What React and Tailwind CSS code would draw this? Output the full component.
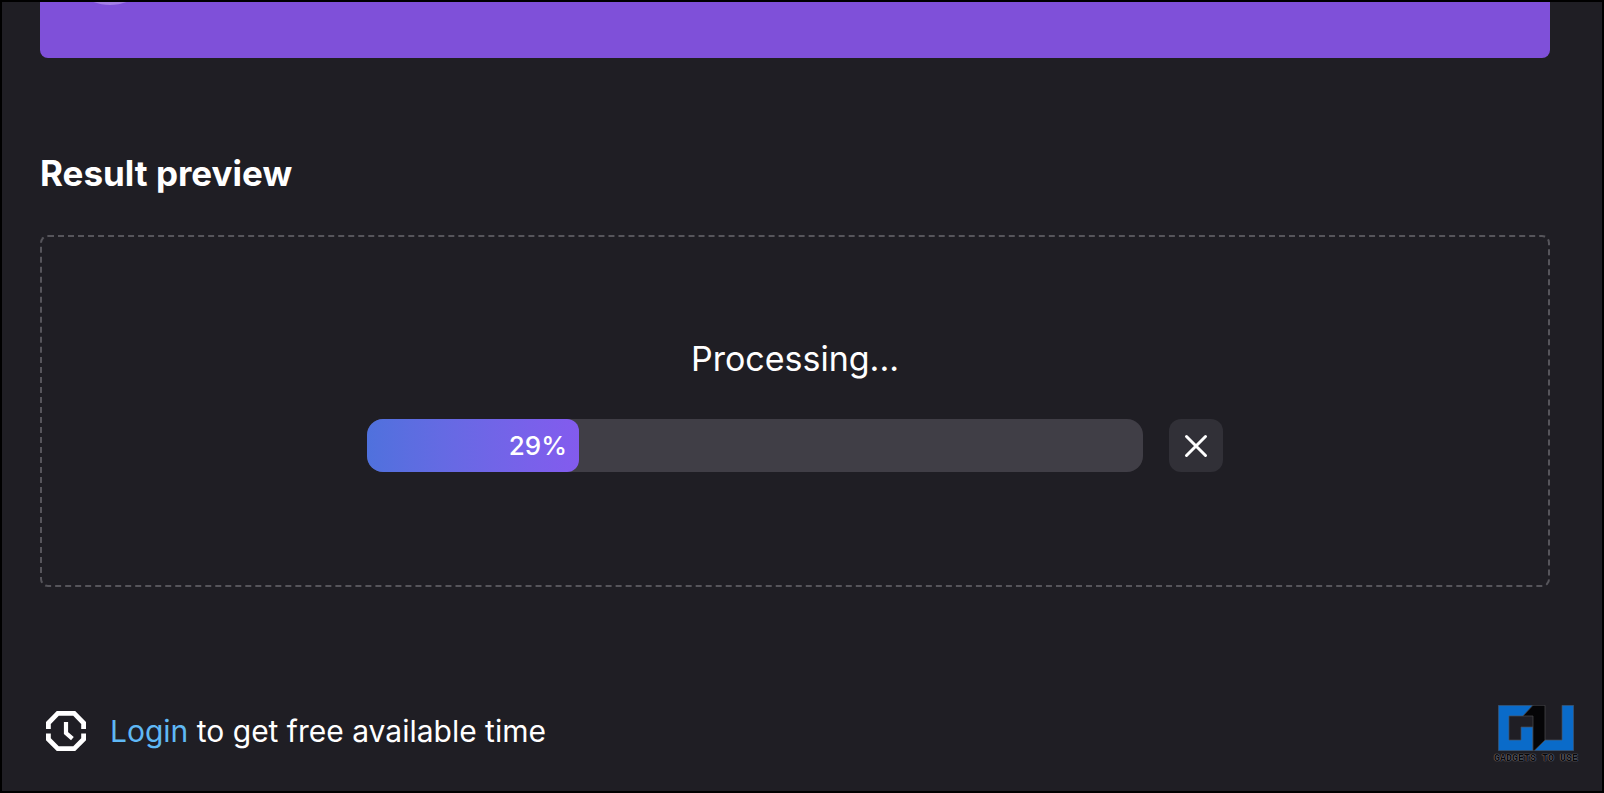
const progress = 29;

function ClockIcon() {
  return (
    <svg className="size-10 shrink-0" viewBox="0 0 40 40" fill="none" stroke="currentColor" strokeWidth="4.8" aria-hidden="true">
      <path d="M2.4 18V12L11.8 2.4H28.2L37.6 12V18" />
      <path d="M2.4 22.5V28.2L11.8 37.6H28.2L37.6 28.2V22.5" />
      <path d="M20 11V22L26.4 27.6" strokeWidth="4.2" />
    </svg>
  );
}

function CloseIcon() {
  return (
    <svg className="size-6" viewBox="0 0 24 24" fill="none" stroke="currentColor" strokeWidth="3" strokeLinecap="round" aria-hidden="true">
      <path d="M2.5 2.5L21.5 21.5M21.5 2.5L2.5 21.5" />
    </svg>
  );
}

function BrandLogo() {
  return (
    <div className="flex flex-col items-center">
      <svg className="h-[46px] w-[76px]" viewBox="0 0 76 46" aria-hidden="true">
        <g fill="#0a6bc9" stroke="#4a4f58" strokeWidth="0.7">
          <path d="M0.3 0.3H35L25 11H11V35H23V29H23V22H35V45.7H0.3Z" />
          <path d="M64 0.3H75.7V45.7H36L47 35H64Z" />
        </g>
        <path fill="#050507" stroke="#4a4a4e" strokeWidth="0.7" d="M35 0.3H47V35L36 45.7H35V11H25Z" />
      </svg>
      <span className="mt-0.5 font-['Liberation_Mono',monospace] text-[10px] leading-3 font-bold whitespace-nowrap text-[#08080a] [text-shadow:0_0_1px_#8a8a90,0_0_1px_#8a8a90]">
        GADGETS TO USE
      </span>
    </div>
  );
}

export default function App() {
  return (
    <main className="flex min-h-screen flex-col border-2 border-black bg-[#1f1e24] pr-[52px] pl-[38px] font-[Inter,sans-serif] text-white">
      <div className="h-14 overflow-hidden rounded-b-lg bg-[#7f50d9] pl-[52px]">
        <svg className="h-1 w-9" viewBox="0 0 36 4" aria-hidden="true">
          <ellipse cx="18" cy="-6" rx="22" ry="9" fill="#a47fe6" />
        </svg>
      </div>

      <h1 className="mt-[91px] text-[35px] leading-12 font-bold">Result preview</h1>

      <section className="mt-[38px] flex h-[352px] flex-col items-center rounded-lg border-2 border-dashed border-[#56555b] pt-[98px]">
        <p id="status" className="text-[34px] leading-12">Processing...</p>
        <div className="mt-9 flex w-full max-w-[856px] items-center gap-[26px]">
          <div
            role="progressbar"
            aria-labelledby="status"
            aria-valuenow={progress}
            aria-valuemin={0}
            aria-valuemax={100}
            className="h-[53px] flex-1 overflow-hidden rounded-2xl bg-[#403e46]"
          >
            <div
              className="flex h-full min-w-[212px] items-center justify-end rounded-r-xl bg-linear-to-r from-[#4f71dd] to-[#835bee] pr-3 text-[26px] font-medium"
              style={{ width: `${progress - 2}%` }}
            >
              {progress}%
            </div>
          </div>
          <button type="button" aria-label="Cancel" className="flex h-[53px] w-[54px] items-center justify-center rounded-xl bg-[#313037]">
            <CloseIcon />
          </button>
        </div>
      </section>

      <footer className="mt-[118px] -mr-7 flex items-start justify-between pl-1.5">
        <div className="mt-1.5 flex items-center gap-6">
          <ClockIcon />
          <p className="text-[30px] leading-10">
            <a href="#login" className="text-[#5fb8f5]">Login</a> to get free available time
          </p>
        </div>
        <BrandLogo />
      </footer>
    </main>
  );
}
